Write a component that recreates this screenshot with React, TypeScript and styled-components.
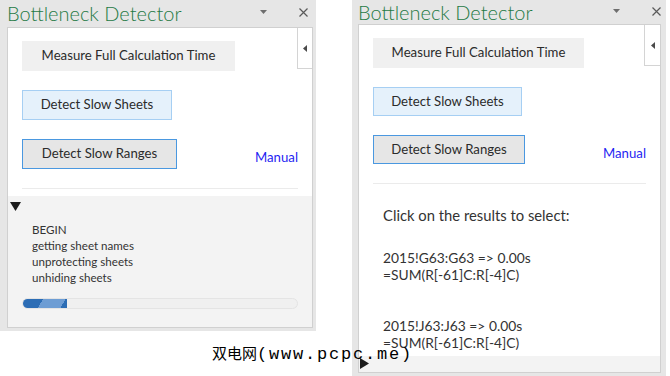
import React from "react";
import styled, { createGlobalStyle, css } from "styled-components";

const FONT = `"Segoe UI", Lato, "Noto Sans", sans-serif`;

const GlobalStyle = createGlobalStyle`
  html, body { margin: 0; padding: 0; background: #ffffff; }
  body { width: 670px; height: 376px; overflow: hidden; font-family: ${FONT}; }
  * { box-sizing: border-box; }
`;

const Page = styled.main`
  position: relative;
  display: flex;
  align-items: flex-start;
  gap: 36px;
  width: 670px;
  height: 376px;
  overflow: hidden;
`;

const Pane = styled.section<{ $w: number; $h: number; $head: number; $pad: string }>`
  flex: none;
  width: ${(p) => p.$w}px;
  height: ${(p) => p.$h}px;
  display: grid;
  grid-template-rows: ${(p) => p.$head}px minmax(0, 1fr);
  padding: ${(p) => p.$pad};
  background: #e6e6e6;
`;

const TitleBar = styled.header<{ $top: number }>`
  display: flex;
  align-items: flex-start;
  padding: ${(p) => p.$top}px 5px 0 0;
`;

const Title = styled.h1`
  margin: 0;
  font-family: ${FONT};
  font-weight: 300;
  font-size: 20px;
  line-height: 24px;
  color: #1f7a45;
  white-space: nowrap;
`;

const TitleIcons = styled.div`
  margin-left: auto;
  display: flex;
  align-items: center;
  gap: 32px;
  height: 24px;
  margin-top: -1px;
`;

const Body = styled.div`
  position: relative;
  display: flex;
  flex-direction: column;
  min-height: 0;
  background: #ffffff;
  border: 1px solid #d0d0d0;
  overflow: hidden;
`;

const CollapseTab = styled.div<{ $w: number; $h: number }>`
  position: absolute;
  top: 0;
  right: 0;
  width: ${(p) => p.$w}px;
  height: ${(p) => p.$h}px;
  display: flex;
  align-items: center;
  justify-content: center;
  background: #ffffff;
  border-left: 1px solid #d4d4d4;
  border-bottom: 1px solid #d4d4d4;
`;

const Controls = styled.div`
  display: flex;
  flex-direction: column;
  align-items: flex-start;
  gap: 19px;
  padding: 13px 14px 0 14px;
`;

type Variant = "plain" | "hover" | "focus";

const Button = styled.button<{ $variant: Variant; $w: number; $h: number }>`
  flex: none;
  width: ${(p) => p.$w}px;
  height: ${(p) => p.$h}px;
  padding: 0;
  font-family: ${FONT};
  font-size: 13.2px;
  line-height: 1;
  color: #2b2b2b;
  text-align: center;
  border: 1px solid transparent;
  border-radius: 0;
  ${(p) =>
    p.$variant === "plain" &&
    css`
      background: #f0f0f0;
      border-color: #f0f0f0;
    `}
  ${(p) =>
    p.$variant === "hover" &&
    css`
      background: #e5f1fb;
      border-color: #a6cff3;
    `}
  ${(p) =>
    p.$variant === "focus" &&
    css`
      background: #e6e6e6;
      border-color: #4a98e0;
    `}
`;

const ActionRow = styled.div`
  align-self: stretch;
  display: flex;
  align-items: center;
  justify-content: space-between;
`;

const ManualLink = styled.a`
  margin-top: 6px;
  font-family: ${FONT};
  font-size: 13.2px;
  line-height: 18px;
  color: #1f1ff2;
  text-decoration: none;
`;

const Divider = styled.hr`
  align-self: stretch;
  margin: 0;
  height: 1px;
  border: 0;
  background: #ebebeb;
`;

const LogPanel = styled.div`
  flex: 1;
  margin-top: 7px;
  background: #f3f3f3;
  display: flex;
  flex-direction: column;
  align-items: flex-start;
`;

const Toggle = styled.div<{ $top: number; $left: number }>`
  display: flex;
  margin: ${(p) => p.$top}px 0 0 ${(p) => p.$left}px;
`;

const LogLines = styled.div`
  margin: 11px 0 0 24px;
  font-family: ${FONT};
  font-size: 11.6px;
  line-height: 16px;
  color: #333333;
`;

const Progress = styled.div`
  align-self: stretch;
  position: relative;
  height: 11px;
  margin: 12px 14px 0 14px;
  border-radius: 6px;
  background: #f0f0f0;
  border: 1px solid #e4e4e4;
  overflow: hidden;
`;

const ProgressFill = styled.div`
  position: absolute;
  left: -1px;
  top: -1px;
  bottom: -1px;
  border-radius: 6px 0 0 6px;
  background: linear-gradient(
    120deg,
    #2c6db5 0%,
    #2c6db5 42%,
    #6d9dd4 42%,
    #6d9dd4 86%,
    #2c6db5 86%
  );
`;

const Results = styled.div`
  flex: 1;
  min-height: 0;
  overflow: hidden;
  padding: 21px 24px 0 24px;
  font-family: ${FONT};
  color: #333333;
`;

const ResultsHeading = styled.p`
  margin: 0 0 24px;
  font-size: 14.8px;
  line-height: 20px;
`;

const ResultItem = styled.div`
  margin-bottom: 34px;
  font-size: 13.8px;
  line-height: 17px;
`;

const LogBar = styled.div`
  flex: none;
  height: 16px;
  background: #f3f3f3;
  display: flex;
  align-items: flex-start;
`;

const Watermark = styled.div`
  position: absolute;
  left: 212px;
  top: 343px;
  display: flex;
  align-items: baseline;
  color: #000000;
  white-space: nowrap;
  pointer-events: none;
`;

const WmCjk = styled.span`
  font-family: "Noto Sans CJK SC", sans-serif;
  font-size: 15px;
  line-height: 20px;
`;

const WmLatin = styled.span`
  font-family: "Liberation Mono", "DejaVu Sans Mono", monospace;
  font-size: 17px;
  line-height: 20px;
  letter-spacing: 1.8px;
`;

const Caret = () => (
  <svg width="7" height="4" viewBox="0 0 7 4">
    <path d="M0 0H7L3.5 4Z" fill="#6e6e6e" />
  </svg>
);

const CloseX = () => (
  <svg width="9" height="9" viewBox="0 0 9 9">
    <path d="M0.5 0.5L8.5 8.5M8.5 0.5L0.5 8.5" stroke="#5a5a5a" strokeWidth="1.2" />
  </svg>
);

const LeftTri = () => (
  <svg width="4" height="7" viewBox="0 0 4 7">
    <path d="M4 0V7L0 3.5Z" fill="#4a4a4a" />
  </svg>
);

const DownTri = () => (
  <svg width="11" height="9" viewBox="0 0 11 9">
    <path d="M0 0H11L5.5 9Z" fill="#1c1c1c" />
  </svg>
);

const RightTri = () => (
  <svg width="9" height="11" viewBox="0 0 9 11">
    <path d="M0 0L9 5.5L0 11Z" fill="#1c1c1c" />
  </svg>
);

type PaneProps = {
  w: number;
  h: number;
  head: number;
  pad: string;
  titleTop: number;
  tab: { w: number; h: number };
  btn: { measure: [number, number]; sheets: [number, number]; ranges: [number, number] };
  children: React.ReactNode;
};

const TaskPane = ({ w, h, head, pad, titleTop, tab, btn, children }: PaneProps) => (
  <Pane $w={w} $h={h} $head={head} $pad={pad}>
    <TitleBar $top={titleTop}>
      <Title>Bottleneck Detector</Title>
      <TitleIcons>
        <Caret />
        <CloseX />
      </TitleIcons>
    </TitleBar>
    <Body>
      <Controls>
        <Button $variant="plain" $w={btn.measure[0]} $h={btn.measure[1]}>
          Measure Full Calculation Time
        </Button>
        <Button $variant="hover" $w={btn.sheets[0]} $h={btn.sheets[1]}>
          Detect Slow Sheets
        </Button>
        <ActionRow>
          <Button $variant="focus" $w={btn.ranges[0]} $h={btn.ranges[1]}>
            Detect Slow Ranges
          </Button>
          <ManualLink>Manual</ManualLink>
        </ActionRow>
        <Divider />
      </Controls>
      {children}
      <CollapseTab $w={tab.w} $h={tab.h}>
        <LeftTri />
      </CollapseTab>
    </Body>
  </Pane>
);

const logLines = ["BEGIN", "getting sheet names", "unprotecting sheets", "unhiding sheets"];

const results = [
  { range: "2015!G63:G63 => 0.00s", formula: "=SUM(R[-61]C:R[-4]C)" },
  { range: "2015!J63:J63 => 0.00s", formula: "=SUM(R[-61]C:R[-4]C)" },
];

const progress = 0.163;

export default function App() {
  return (
    <>
      <GlobalStyle />
      <Page>
        <TaskPane
          w={316}
          h={331}
          head={27}
          pad="0 3px 3px 7px"
          titleTop={1}
          tab={{ w: 15, h: 41 }}
          btn={{ measure: [213, 30], sheets: [150, 30], ranges: [155, 30] }}
        >
          <LogPanel>
            <Toggle $top={6} $left={2}>
              <DownTri />
            </Toggle>
            <LogLines>
              {logLines.map((l) => (
                <div key={l}>{l}</div>
              ))}
            </LogLines>
            <Progress>
              <ProgressFill style={{ width: `${progress * 100}%` }} />
            </Progress>
          </LogPanel>
        </TaskPane>
        <TaskPane
          w={314}
          h={376}
          head={24}
          pad="0 5px 3px 6px"
          titleTop={-2}
          tab={{ w: 16, h: 41 }}
          btn={{ measure: [211, 30], sheets: [149, 29], ranges: [152, 29] }}
        >
          <Results>
            <ResultsHeading>Click on the results to select:</ResultsHeading>
            {results.map((r, i) => (
              <ResultItem key={i}>
                <div>{r.range}</div>
                <div>{r.formula}</div>
              </ResultItem>
            ))}
          </Results>
          <LogBar>
            <Toggle $top={2} $left={1}>
              <RightTri />
            </Toggle>
          </LogBar>
        </TaskPane>
        <Watermark>
          <WmCjk>双电网</WmCjk>
          <WmLatin>(www.pcpc.me)</WmLatin>
        </Watermark>
      </Page>
    </>
  );
}
